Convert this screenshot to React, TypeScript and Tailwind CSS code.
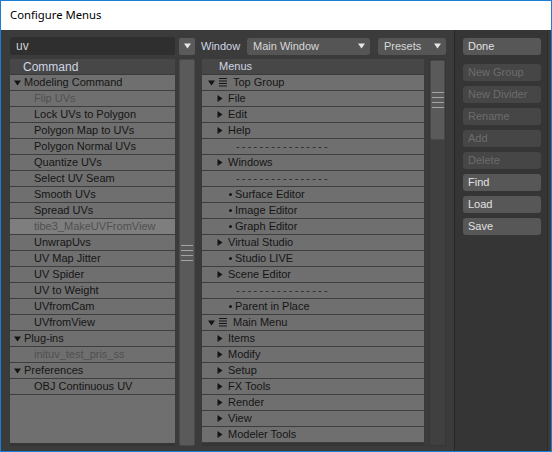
import React from 'react';

type CmdRow = { label: string; kind: 'group' | 'item'; dim?: boolean; hilite?: boolean };
type MenuRow = { label: string; kind: 'top' | 'sub' | 'leaf' | 'div' };

const commands: CmdRow[] = [
  { label: 'Modeling Command', kind: 'group' },
  { label: 'Flip UVs', kind: 'item', dim: true },
  { label: 'Lock UVs to Polygon', kind: 'item' },
  { label: 'Polygon Map to UVs', kind: 'item' },
  { label: 'Polygon Normal UVs', kind: 'item' },
  { label: 'Quantize UVs', kind: 'item' },
  { label: 'Select UV Seam', kind: 'item' },
  { label: 'Smooth UVs', kind: 'item' },
  { label: 'Spread UVs', kind: 'item' },
  { label: 'tibe3_MakeUVFromView', kind: 'item', dim: true, hilite: true },
  { label: 'UnwrapUvs', kind: 'item' },
  { label: 'UV Map Jitter', kind: 'item' },
  { label: 'UV Spider', kind: 'item' },
  { label: 'UV to Weight', kind: 'item' },
  { label: 'UVfromCam', kind: 'item' },
  { label: 'UVfromView', kind: 'item' },
  { label: 'Plug-ins', kind: 'group' },
  { label: 'inituv_test_pris_ss', kind: 'item', dim: true },
  { label: 'Preferences', kind: 'group' },
  { label: 'OBJ Continuous UV', kind: 'item' },
];

const menus: MenuRow[] = [
  { label: 'Top Group', kind: 'top' },
  { label: 'File', kind: 'sub' },
  { label: 'Edit', kind: 'sub' },
  { label: 'Help', kind: 'sub' },
  { label: '', kind: 'div' },
  { label: 'Windows', kind: 'sub' },
  { label: '', kind: 'div' },
  { label: 'Surface Editor', kind: 'leaf' },
  { label: 'Image Editor', kind: 'leaf' },
  { label: 'Graph Editor', kind: 'leaf' },
  { label: 'Virtual Studio', kind: 'sub' },
  { label: 'Studio LIVE', kind: 'leaf' },
  { label: 'Scene Editor', kind: 'sub' },
  { label: '', kind: 'div' },
  { label: 'Parent in Place', kind: 'leaf' },
  { label: 'Main Menu', kind: 'top' },
  { label: 'Items', kind: 'sub' },
  { label: 'Modify', kind: 'sub' },
  { label: 'Setup', kind: 'sub' },
  { label: 'FX Tools', kind: 'sub' },
  { label: 'Render', kind: 'sub' },
  { label: 'View', kind: 'sub' },
  { label: 'Modeler Tools', kind: 'sub' },
];

const buttons = [
  { label: 'New Group', off: true },
  { label: 'New Divider', off: true },
  { label: 'Rename', off: true },
  { label: 'Add', off: true },
  { label: 'Delete', off: true },
  { label: 'Find', off: false },
  { label: 'Load', off: false },
  { label: 'Save', off: false },
];

const DownTri = ({ color = '#141414' }: { color?: string }) => (
  <svg width="7" height="6" viewBox="0 0 7 6" className="shrink-0">
    <path d="M0 0.5 H7 L3.5 5.5 Z" fill={color} />
  </svg>
);

const RightTri = () => (
  <svg width="6" height="7" viewBox="0 0 6 7" className="shrink-0">
    <path d="M0.5 0 V7 L5.5 3.5 Z" fill="#141414" />
  </svg>
);

const ListIcon = () => (
  <svg width="8" height="9" viewBox="0 0 8 9" className="shrink-0">
    <path d="M0 0.5 H8 M0 3 H8 M0 5.5 H8 M0 8 H8" stroke="#141414" strokeWidth="1" />
  </svg>
);

const Grip = () => (
  <div className="flex flex-col gap-[4px]">
    <div className="w-[12px] h-px bg-[#a4a4a4]" />
    <div className="w-[12px] h-px bg-[#a4a4a4]" />
    <div className="w-[12px] h-px bg-[#a4a4a4]" />
    <div className="w-[12px] h-px bg-[#a4a4a4]" />
  </div>
);

const App: React.FC = () => {
  return (
    <div className="w-[552px] h-[452px] border border-[#1a7fd4] flex flex-col font-['Liberation_Sans',Arial,sans-serif] text-[11px] overflow-hidden">
      {/* title bar */}
      <div className="h-[29px] bg-white flex items-center pl-[9px] text-black text-[11.3px] font-['Noto_Sans',sans-serif]">
        Configure Menus
      </div>

      <div className="flex-1 flex bg-[#3b3b3b]">
        {/* main area */}
        <div className="flex flex-col pl-[9px] pr-[8px] pt-[7px]">
          <div className="flex items-center h-[18px]">
            <div className="w-[165px] h-[18px] rounded-[3px] bg-[#2f2f2f] pl-[6px] flex items-center text-[#d2d2d2] text-[12px]">
              uv
            </div>
            <div className="ml-[4px] w-[16px] h-[17px] rounded-[2px] bg-[#5a5a5a] flex items-center justify-center">
              <DownTri color="#e6e6e6" />
            </div>
            <div className="w-[52px] pl-[6px] text-[#cfd6e4]">Window</div>
            <div className="w-[123px] h-[17px] rounded-[3px] bg-[#555555] flex items-center justify-between pl-[6px] pr-[5px] text-[#d8d8d8]">
              <span>Main Window</span>
              <DownTri color="#e6e6e6" />
            </div>
            <div className="ml-[8px] w-[68px] h-[17px] rounded-[3px] bg-[#555555] flex items-center justify-between pl-[6px] pr-[5px] text-[#d8d8d8]">
              <span>Presets</span>
              <DownTri color="#e6e6e6" />
            </div>
          </div>

          <div className="flex mt-[4px] h-[387px]">
            {/* command list */}
            <div className="w-[165px] h-full bg-[#6f6f6f] border-b-[3px] border-[#353535] flex flex-col">
              <div className="h-[16px] bg-[#474747] border-b border-[#3a3a3a] pl-[13px] flex items-center text-[#cfd6e4] leading-none text-[12px]">
                Command
              </div>
              {commands.map((c) => (
                <div
                  key={c.label}
                  className={`h-[16px] shrink-0 border-b border-[#3e3e3e] flex items-center leading-none ${
                    c.hilite ? 'bg-[#7e7e7e]' : ''
                  } ${c.dim ? 'text-[#505050]' : 'text-[#151515]'} ${
                    c.kind === 'group' ? 'pl-[4px]' : 'pl-[24px]'
                  }`}
                >
                  {c.kind === 'group' && (
                    <span className="w-[10px] flex">
                      <DownTri />
                    </span>
                  )}
                  {c.label}
                </div>
              ))}
            </div>

            {/* command scrollbar (full thumb) */}
            <div className="ml-[4px] w-[16px] h-full rounded-[2px] bg-[#5a5a5a] border border-[#4a4a4a] flex items-center justify-center">
              <Grip />
            </div>

            {/* menu list */}
            <div className="ml-[7px] w-[222px] h-full bg-[#6f6f6f] border-b-[3px] border-[#353535] flex flex-col overflow-hidden">
              <div className="h-[16px] shrink-0 bg-[#474747] border-b border-[#3a3a3a] pl-[17px] flex items-center text-[#cfd6e4] leading-none">
                Menus
              </div>
              {menus.map((m, i) => (
                <div
                  key={i}
                  className="h-[16px] shrink-0 border-b border-[#3e3e3e] flex items-center leading-none text-[#151515]"
                >
                  {m.kind === 'top' && (
                    <div className="flex items-center pl-[6px]">
                      <DownTri />
                      <span className="ml-[4px]">
                        <ListIcon />
                      </span>
                      <span className="ml-[6px]">{m.label}</span>
                    </div>
                  )}
                  {m.kind === 'sub' && (
                    <div className="flex items-center pl-[15px]">
                      <RightTri />
                      <span className="ml-[5px]">{m.label}</span>
                    </div>
                  )}
                  {m.kind === 'leaf' && (
                    <div className="flex items-center pl-[27px]">
                      <span className="w-[3px] h-[3px] bg-[#141414] rounded-full" />
                      <span className="ml-[3px]">{m.label}</span>
                    </div>
                  )}
                  {m.kind === 'div' && (
                    <div className="pl-[34px] tracking-[2.2px] text-[#2a2a2a]">----------------</div>
                  )}
                </div>
              ))}
            </div>

            {/* menu scrollbar */}
            <div className="ml-[5px] w-[17px] h-full rounded-[2px] bg-[#404040] border border-[#363636] flex flex-col">
              <div className="h-[80px] rounded-[2px] bg-[#5a5a5a] border border-[#4a4a4a] flex items-center justify-center">
                <Grip />
              </div>
            </div>
          </div>
        </div>

        <div className="w-px bg-[#262626]" />

        {/* right panel */}
        <div className="w-[93px] bg-[#353535] border-r border-[#2c2c2c] pl-[8px] pt-[8px] flex flex-col">
          <div className="w-[78px] h-[17px] rounded-[3px] bg-[#575757] text-[#e2e2e2] pl-[5px] flex items-center">
            Done
          </div>
          <div className="mt-[9px] flex flex-col gap-[5px]">
            {buttons.map((b) => (
              <div
                key={b.label}
                className={`w-[78px] h-[17px] rounded-[3px] pl-[5px] flex items-center ${
                  b.off ? 'bg-[#464646] text-[#6c6c6c]' : 'bg-[#575757] text-[#e2e2e2]'
                }`}
              >
                {b.label}
              </div>
            ))}
          </div>
        </div>
        <div className="flex-1 bg-[#3b3b3b]" />
      </div>
    </div>
  );
};

export default App;
